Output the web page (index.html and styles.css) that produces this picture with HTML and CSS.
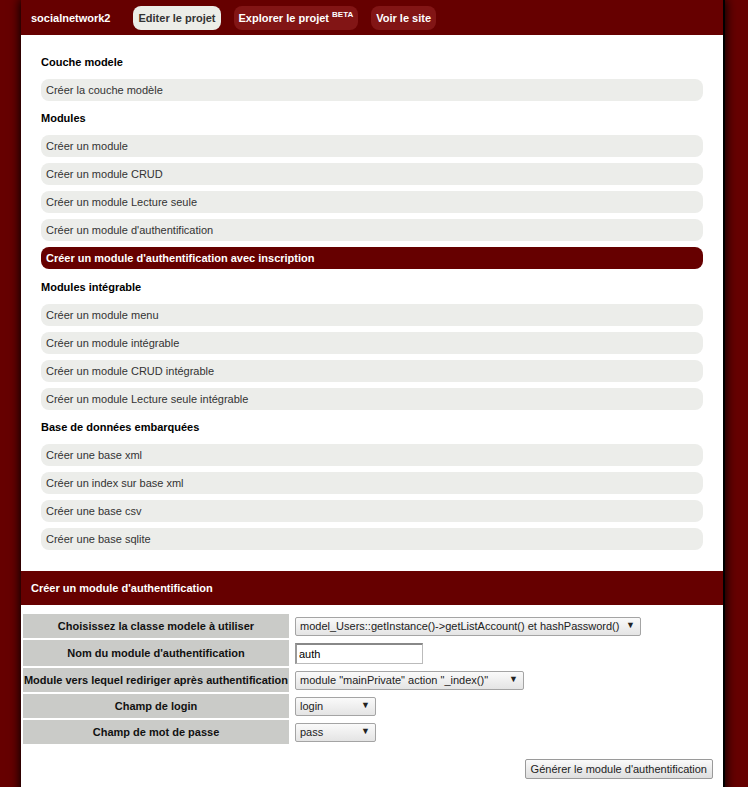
FILE: index.html
```html
<!DOCTYPE html>
<html lang="fr">
<head>
<meta charset="utf-8">
<title>socialnetwork2</title>
<link rel="stylesheet" href="styles.css">
</head>
<body>
<div class="page">
  <header class="topbar">
    <span class="brand">socialnetwork2</span>
    <nav class="nav">
      <a class="pill pill-active" href="#">Editer le projet</a>
      <a class="pill" href="#">Explorer le projet <sup>BETA</sup></a>
      <a class="pill" href="#">Voir le site</a>
    </nav>
  </header>

  <main class="menu">
    <h3 class="menu-title">Couche modele</h3>
    <a class="menu-item" href="#">Créer la couche modèle</a>

    <h3 class="menu-title">Modules</h3>
    <a class="menu-item" href="#">Créer un module</a>
    <a class="menu-item" href="#">Créer un module CRUD</a>
    <a class="menu-item" href="#">Créer un module Lecture seule</a>
    <a class="menu-item" href="#">Créer un module d'authentification</a>
    <a class="menu-item menu-item-active" href="#">Créer un module d'authentification avec inscription</a>

    <h3 class="menu-title">Modules intégrable</h3>
    <a class="menu-item" href="#">Créer un module menu</a>
    <a class="menu-item" href="#">Créer un module intégrable</a>
    <a class="menu-item" href="#">Créer un module CRUD intégrable</a>
    <a class="menu-item" href="#">Créer un module Lecture seule intégrable</a>

    <h3 class="menu-title">Base de données embarquées</h3>
    <a class="menu-item" href="#">Créer une base xml</a>
    <a class="menu-item" href="#">Créer un index sur base xml</a>
    <a class="menu-item" href="#">Créer une base csv</a>
    <a class="menu-item" href="#">Créer une base sqlite</a>
  </main>

  <section class="panel">
    <h2 class="panel-title">Créer un module d'authentification</h2>
    <form class="form">
      <table class="form-table">
        <tr>
          <th>Choisissez la classe modele à utiliser</th>
          <td><span class="select w-model"><select><option>model_Users::getInstance()-&gt;getListAccount() et hashPassword()</option></select></span></td>
        </tr>
        <tr class="row-input">
          <th>Nom du module d'authentification</th>
          <td><input class="text-input" type="text" value="auth"></td>
        </tr>
        <tr>
          <th>Module vers lequel rediriger après authentification</th>
          <td><span class="select w-redirect"><select><option>module "mainPrivate" action "_index()"</option></select></span></td>
        </tr>
        <tr>
          <th>Champ de login</th>
          <td><span class="select w-field"><select><option>login</option></select></span></td>
        </tr>
        <tr>
          <th>Champ de mot de passe</th>
          <td><span class="select w-field"><select><option>pass</option></select></span></td>
        </tr>
      </table>
      <div class="actions">
        <button class="btn" type="button">Générer le module d'authentification</button>
      </div>
    </form>
  </section>
</div>
</body>
</html>
```

FILE: styles.css
```css
html, body {
  margin: 0;
  padding: 0;
}

body {
  background: #660000;
  font-family: "Liberation Sans", Arial, sans-serif;
  font-size: 11px;
  color: #333;
  min-height: 787px;
}

.page {
  margin-left: 21px;
  width: 702px;
  min-height: 800px;
  background: #fff;
  border-right: 2px solid #000;
  box-shadow: 0 0 10px 1px #000;
}

/* top bar */
.topbar {
  height: 35px;
  background: #660000;
  display: flex;
  align-items: center;
  padding-left: 10px;
  box-sizing: border-box;
}

.brand {
  color: #fff;
  font-weight: bold;
  font-size: 11px;
  margin-right: 23px;
}

.nav {
  display: flex;
  gap: 13px;
}

.pill {
  display: block;
  height: 24px;
  line-height: 24px;
  padding: 0 5px;
  border-radius: 8px;
  background: #821515;
  color: #fff;
  font-weight: bold;
  text-decoration: none;
  font-size: 11px;
}

.pill sup {
  font-size: 8px;
  vertical-align: top;
  line-height: 17px;
}

.pill-active {
  background: #ecede8;
  color: #333;
}

/* menu */
.menu {
  display: flex;
  flex-direction: column;
  gap: 6px;
  padding: 16px 20px 21px;
}

.menu-title {
  margin: 0;
  height: 22px;
  line-height: 22px;
  font-size: 11px;
  font-weight: bold;
  color: #000;
}

.menu-item {
  display: block;
  height: 22px;
  line-height: 22px;
  padding: 0 5px;
  border-radius: 8px;
  background: #ecedea;
  color: #333;
  text-decoration: none;
  font-size: 11px;
}

.menu-item-active {
  background: #660000;
  color: #fff;
  font-weight: bold;
  margin-bottom: 1px;
}

/* panel */
.panel-title {
  margin: 0;
  height: 34px;
  line-height: 34px;
  padding-left: 10px;
  background: #660000;
  color: #fff;
  font-size: 11px;
  font-weight: bold;
}

.form {
  padding-top: 7px;
}

.form-table {
  border-spacing: 2px;
  border-collapse: separate;
}

.form-table th {
  width: 266px;
  height: 24px;
  padding: 0;
  background: #cacbc8;
  color: #111;
  font-size: 11px;
  font-weight: bold;
  text-align: center;
  white-space: nowrap;
}

.form-table td {
  padding: 0 0 0 4px;
  height: 24px;
}

.row-input th,
.row-input td {
  height: 26px;
}

.select {
  position: relative;
  display: inline-block;
  vertical-align: middle;
}

.select select {
  appearance: none;
  -webkit-appearance: none;
  width: 100%;
  height: 19px;
  margin: 0;
  padding: 0 18px 0 4px;
  border: 1px solid #a4a4a4;
  border-radius: 2px;
  background: linear-gradient(#fafafa, #e4e4e4);
  font-family: "Liberation Sans", Arial, sans-serif;
  font-size: 11px;
  color: #222;
  box-sizing: border-box;
}

.select::after {
  content: "▼";
  position: absolute;
  right: 6px;
  top: 3px;
  font-size: 9px;
  color: #222;
  pointer-events: none;
}

.w-model { width: 346px; }
.w-redirect { width: 229px; }
.w-field { width: 81px; }

.text-input {
  width: 128px;
  height: 21px;
  margin: 0;
  padding: 0 2px;
  border: 1px solid #bbb;
  border-top: 2px solid #888;
  border-left: 2px solid #999;
  font-family: "Liberation Sans", Arial, sans-serif;
  font-size: 11px;
  color: #000;
  box-sizing: border-box;
  vertical-align: middle;
}

.actions {
  display: flex;
  justify-content: flex-end;
  padding: 13px 10px 20px;
}

.btn {
  height: 20px;
  padding: 0 5px;
  white-space: nowrap;
  border: 1px solid #9a9a9a;
  border-radius: 2px;
  background: linear-gradient(#fafafa, #dedede);
  font-family: "Liberation Sans", Arial, sans-serif;
  font-size: 11px;
  color: #222;
}
```
